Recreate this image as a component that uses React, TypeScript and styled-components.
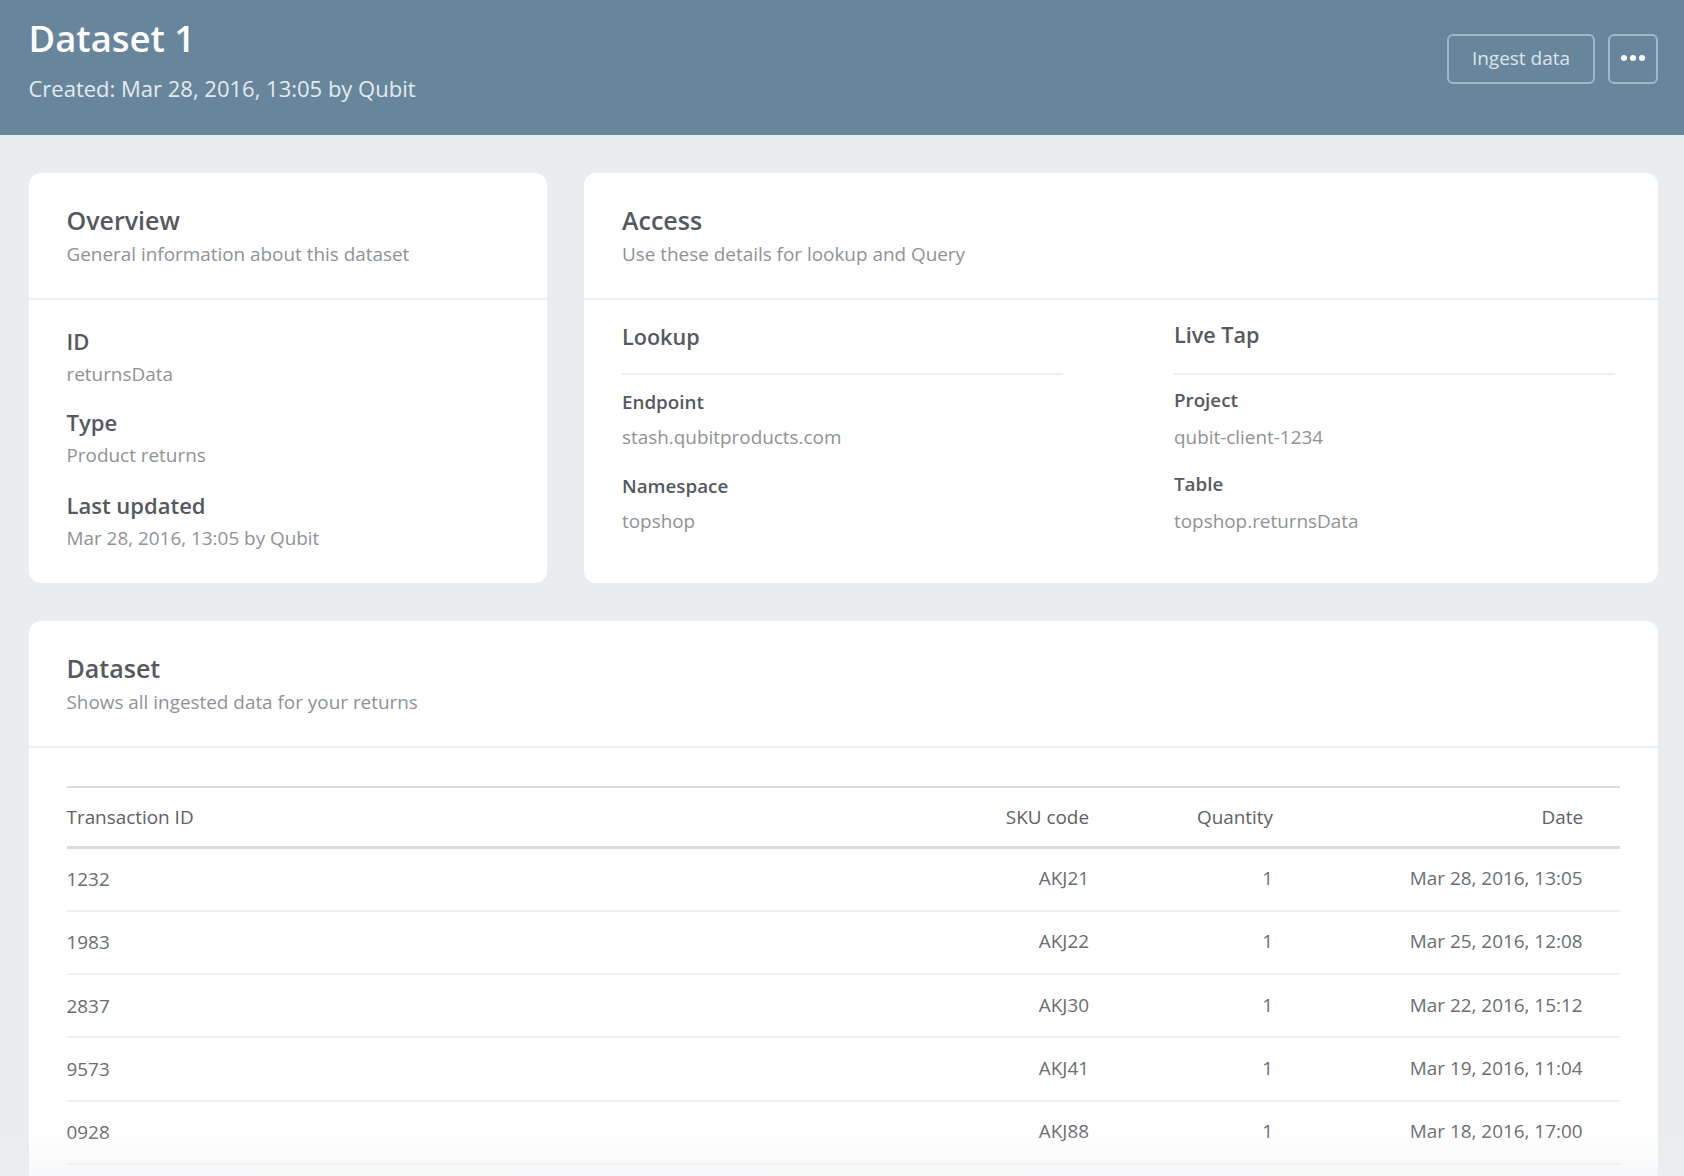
import React from "react";
import styled, { createGlobalStyle } from "styled-components";

const GlobalStyle = createGlobalStyle`
  html, body {
    margin: 0;
    height: 100%;
    overflow: hidden;
    background: #e9edf0;
    font-family: "Open Sans", "Noto Sans", sans-serif;
  }
  * { box-sizing: border-box; }
`;

const Page = styled.div`
  position: relative;
  height: 1176px;
  overflow: hidden;
`;

const Header = styled.header`
  height: 134.5px;
  background: #67869c;
  padding: 0 26px 0 28.5px;
  display: flex;
  justify-content: space-between;
  align-items: flex-start;
`;

const HeaderText = styled.div`
  padding-top: 15px;
`;

const Title = styled.h1`
  margin: 0;
  font-size: 36.4px;
  line-height: 47px;
  font-weight: 600;
  color: #fff;
`;

const Created = styled.div`
  margin-top: 11px;
  font-size: 22px;
  line-height: 30px;
  color: #e4eaee;
`;

const Actions = styled.div`
  display: flex;
  gap: 13px;
  padding-top: 33.5px;
`;

const OutlineButton = styled.button<{ $square?: boolean }>`
  height: 50px;
  width: ${(p) => (p.$square ? "50px" : "148px")};
  padding: 0 0 2px;
  display: flex;
  align-items: center;
  justify-content: center;
  gap: 3px;
  background: transparent;
  border: 2px solid #a3b6c4;
  border-radius: 6px;
  color: #dbe3e9;
  font-family: inherit;
  font-size: 19px;
`;

const Dot = styled.span`
  width: 6px;
  height: 6px;
  border-radius: 50%;
  background: #fff;
`;

const Content = styled.main`
  padding: 38.5px 26px 0 28.5px;
  display: flex;
  flex-direction: column;
  gap: 38px;
`;

const TopRow = styled.div`
  display: grid;
  grid-template-columns: 518px 1fr;
  gap: 37.5px;
`;

const Card = styled.section<{ $tall?: boolean }>`
  background: #fff;
  border-radius: 12px;
  min-height: ${(p) => (p.$tall ? "640px" : "0")};
`;

const CardHeader = styled.div`
  height: 126.5px;
  padding: 29px 38px 0;
  border-bottom: 2px solid #eef0f2;
`;

const CardTitle = styled.h2`
  margin: 0;
  font-size: 25px;
  line-height: 36px;
  font-weight: 600;
  color: #55595f;
`;

const CardSubtitle = styled.p`
  margin: 0;
  font-size: 18.9px;
  line-height: 32px;
  color: #8f9296;
`;

const OverviewBody = styled.div`
  height: 283.5px;
  padding: 25.5px 38px 0;
`;

const OverviewItem = styled.div`
  margin-bottom: 16px;

  &:nth-child(2) {
    margin-bottom: 18px;
  }
`;

const Label = styled.div`
  font-size: 22px;
  line-height: 32px;
  font-weight: 600;
  color: #55595f;
`;

const Value = styled.div`
  margin-top: 1px;
  font-size: 18.9px;
  line-height: 32px;
  color: #8f9296;
`;

const AccessBody = styled.div`
  padding: 0 43px 0 38px;
  display: grid;
  grid-template-columns: 441px 441px;
  column-gap: 111px;
`;

const AccessColumn = styled.div<{ $shift?: number }>`
  padding-top: ${(p) => 19.5 - (p.$shift || 0)}px;
`;

const ColumnTitle = styled.h3<{ $shift?: number }>`
  margin: 0;
  height: ${(p) => 56 + (p.$shift || 0)}px;
  font-size: 21.6px;
  line-height: 36px;
  font-weight: 600;
  color: #55595f;
  border-bottom: 2px solid #eef0f2;
`;

const AccessItem = styled.div`
  margin-top: 13px;
  margin-bottom: 20px;
`;

const AccessLabel = styled.div<{ $shift?: number }>`
  margin-top: ${(p) => -1 - (p.$shift || 0)}px;
  font-size: 18.8px;
  line-height: 30px;
  font-weight: 600;
  color: #55595f;
`;

const AccessValue = styled.div<{ $shift?: number }>`
  margin-top: ${(p) => 5 + (p.$shift || 0)}px;
  font-size: 18.9px;
  line-height: 30px;
  color: #8f9296;
`;

const TableWrap = styled.div`
  padding: 38px 38px 0;
`;

const Table = styled.table`
  width: 100%;
  border-collapse: collapse;
  table-layout: fixed;
  border-top: 2px solid #d9dce3;
`;

const Th = styled.th<{ $w?: string; $right?: boolean; $pad?: boolean }>`
  width: ${(p) => p.$w || "auto"};
  height: 61px;
  padding: 0 ${(p) => (p.$pad ? "37px" : "0")} 0 0;
  border-bottom: 3px solid #d9dce3;
  text-align: ${(p) => (p.$right ? "right" : "left")};
  font-size: 18.9px;
  font-weight: 400;
  color: #5d6167;
`;

const Td = styled.td<{ $right?: boolean; $pad?: boolean }>`
  height: 63.25px;
  padding: 0 0 ${(p) => (p.$right ? "2px" : "0")} 0;
  padding-right: ${(p) => (p.$pad ? "37.5px" : "0")};
  border-bottom: 2px solid #eef0f2;
  text-align: ${(p) => (p.$right ? "right" : "left")};
  font-size: 18.9px;
  color: #6a6d72;
`;

const BottomFade = styled.div`
  position: absolute;
  left: 0;
  right: 0;
  bottom: 0;
  height: 45px;
  background: linear-gradient(to bottom, rgba(238, 240, 242, 0), rgba(238, 240, 242, 0.5));
  pointer-events: none;
`;

const rows = [
  ["1232", "AKJ21", "1", "Mar 28, 2016, 13:05"],
  ["1983", "AKJ22", "1", "Mar 25, 2016, 12:08"],
  ["2837", "AKJ30", "1", "Mar 22, 2016, 15:12"],
  ["9573", "AKJ41", "1", "Mar 19, 2016, 11:04"],
  ["0928", "AKJ88", "1", "Mar 18, 2016, 17:00"],
];

const overview = [
  ["ID", "returnsData"],
  ["Type", "Product returns"],
  ["Last updated", "Mar 28, 2016, 13:05 by Qubit"],
];

const access = [
  {
    title: "Lookup",
    shift: 0,
    items: [
      ["Endpoint", "stash.qubitproducts.com"],
      ["Namespace", "topshop"],
    ],
  },
  {
    title: "Live Tap",
    shift: 2,
    items: [
      ["Project", "qubit-client-1234"],
      ["Table", "topshop.returnsData"],
    ],
  },
];

export default function App() {
  return (
    <Page>
      <GlobalStyle />
      <Header>
        <HeaderText>
          <Title>Dataset 1</Title>
          <Created>Created: Mar 28, 2016, 13:05 by Qubit</Created>
        </HeaderText>
        <Actions>
          <OutlineButton>Ingest data</OutlineButton>
          <OutlineButton $square aria-label="More">
            <Dot />
            <Dot />
            <Dot />
          </OutlineButton>
        </Actions>
      </Header>
      <Content>
        <TopRow>
          <Card>
            <CardHeader>
              <CardTitle>Overview</CardTitle>
              <CardSubtitle>General information about this dataset</CardSubtitle>
            </CardHeader>
            <OverviewBody>
              {overview.map(([label, value]) => (
                <OverviewItem key={label}>
                  <Label>{label}</Label>
                  <Value>{value}</Value>
                </OverviewItem>
              ))}
            </OverviewBody>
          </Card>
          <Card>
            <CardHeader>
              <CardTitle>Access</CardTitle>
              <CardSubtitle>Use these details for lookup and Query</CardSubtitle>
            </CardHeader>
            <AccessBody>
              {access.map((col) => (
                <AccessColumn key={col.title} $shift={col.shift}>
                  <ColumnTitle $shift={col.shift}>{col.title}</ColumnTitle>
                  {col.items.map(([label, value]) => (
                    <AccessItem key={label}>
                      <AccessLabel $shift={col.shift}>{label}</AccessLabel>
                      <AccessValue $shift={col.shift}>{value}</AccessValue>
                    </AccessItem>
                  ))}
                </AccessColumn>
              ))}
            </AccessBody>
          </Card>
        </TopRow>
        <Card $tall>
          <CardHeader>
            <CardTitle>Dataset</CardTitle>
            <CardSubtitle>Shows all ingested data for your returns</CardSubtitle>
          </CardHeader>
          <TableWrap>
            <Table>
              <thead>
                <tr>
                  <Th>Transaction ID</Th>
                  <Th $right $w="200px">SKU code</Th>
                  <Th $right $w="184px">Quantity</Th>
                  <Th $right $pad $w="347px">Date</Th>
                </tr>
              </thead>
              <tbody>
                {rows.map((r) => (
                  <tr key={r[0]}>
                    <Td>{r[0]}</Td>
                    <Td $right>{r[1]}</Td>
                    <Td $right>{r[2]}</Td>
                    <Td $right $pad>{r[3]}</Td>
                  </tr>
                ))}
              </tbody>
            </Table>
          </TableWrap>
        </Card>
      </Content>
      <BottomFade />
    </Page>
  );
}
